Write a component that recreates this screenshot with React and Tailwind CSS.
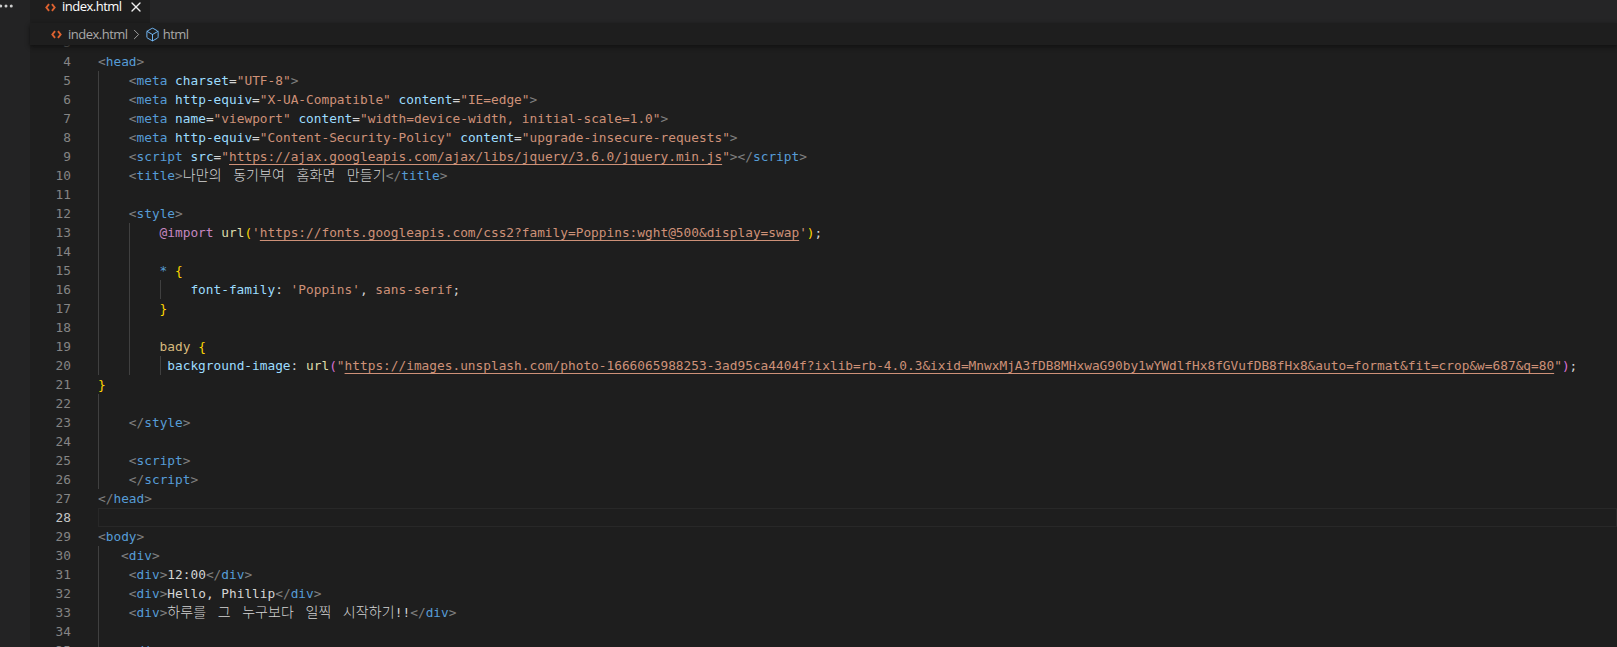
import { X, ChevronRight, Box, Ellipsis } from 'lucide-react';

const mono = 'font-["DejaVu_Sans_Mono","Noto_Sans_CJK_KR",monospace]';

// token colours
const c = {
  b: 'text-[#808080]',
  t: 'text-[#569cd6]',
  a: 'text-[#9cdcfe]',
  s: 'text-[#ce9178]',
  l: 'text-[#ce9178] underline decoration-1 underline-offset-[3px]',
  x: 'text-[#d4d4d4]',
  h: 'text-[#d4d4d4] text-[14px] font-light tracking-[0.1px] [word-spacing:2.9px]',
  y: 'text-[#ffd700]',
  p: 'text-[#da70d6]',
  f: 'text-[#dcdcaa]',
  k: 'text-[#c586c0]',
  u: 'text-[#d7ba7d]',
};

const open = (name) => [['b', '<'], ['t', name], ['b', '>']];
const close = (name) => [['b', '</'], ['t', name], ['b', '>']];

// n = line number, g = indent guides, i = indent in chars, code = tokens
const lines = [
  { n: 3, g: 0, i: 0, code: [] },
  { n: 4, g: 0, i: 0, code: open('head') },
  { n: 5, g: 1, i: 4, code: [['b', '<'], ['t', 'meta'], ['x', ' '], ['a', 'charset'], ['x', '='], ['s', '"UTF-8"'], ['b', '>']] },
  { n: 6, g: 1, i: 4, code: [['b', '<'], ['t', 'meta'], ['x', ' '], ['a', 'http-equiv'], ['x', '='], ['s', '"X-UA-Compatible"'], ['x', ' '], ['a', 'content'], ['x', '='], ['s', '"IE=edge"'], ['b', '>']] },
  { n: 7, g: 1, i: 4, code: [['b', '<'], ['t', 'meta'], ['x', ' '], ['a', 'name'], ['x', '='], ['s', '"viewport"'], ['x', ' '], ['a', 'content'], ['x', '='], ['s', '"width=device-width, initial-scale=1.0"'], ['b', '>']] },
  { n: 8, g: 1, i: 4, code: [['b', '<'], ['t', 'meta'], ['x', ' '], ['a', 'http-equiv'], ['x', '='], ['s', '"Content-Security-Policy"'], ['x', ' '], ['a', 'content'], ['x', '='], ['s', '"upgrade-insecure-requests"'], ['b', '>']] },
  { n: 9, g: 1, i: 4, code: [['b', '<'], ['t', 'script'], ['x', ' '], ['a', 'src'], ['x', '='], ['s', '"'], ['l', 'https://ajax.googleapis.com/ajax/libs/jquery/3.6.0/jquery.min.js'], ['s', '"'], ['b', '>'], ...close('script')] },
  { n: 10, g: 1, i: 4, code: [...open('title'), ['h', '나만의 동기부여 홈화면 만들기'], ...close('title')] },
  { n: 11, g: 1, i: 4, code: [] },
  { n: 12, g: 1, i: 4, code: open('style') },
  { n: 13, g: 2, i: 8, code: [['k', '@import'], ['x', ' '], ['f', 'url'], ['y', '('], ['s', "'"], ['l', 'https://fonts.googleapis.com/css2?family=Poppins:wght@500&display=swap'], ['s', "'"], ['y', ')'], ['x', ';']] },
  { n: 14, g: 2, i: 8, code: [] },
  { n: 15, g: 2, i: 8, code: [['t', '*'], ['x', ' '], ['y', '{']] },
  { n: 16, g: 3, i: 12, code: [['a', 'font-family'], ['x', ': '], ['s', "'Poppins'"], ['x', ', '], ['s', 'sans-serif'], ['x', ';']] },
  { n: 17, g: 2, i: 8, code: [['y', '}']] },
  { n: 18, g: 2, i: 8, code: [] },
  { n: 19, g: 2, i: 8, code: [['u', 'bady'], ['x', ' '], ['y', '{']] },
  { n: 20, g: 3, i: 9, code: [['a', 'background-image'], ['x', ': '], ['f', 'url'], ['p', '('], ['s', '"'], ['l', 'https://images.unsplash.com/photo-1666065988253-3ad95ca4404f?ixlib=rb-4.0.3&ixid=MnwxMjA3fDB8MHxwaG90by1wYWdlfHx8fGVufDB8fHx8&auto=format&fit=crop&w=687&q=80'], ['s', '"'], ['p', ')'], ['x', ';']] },
  { n: 21, g: 0, i: 0, code: [['y', '}']] },
  { n: 22, g: 1, i: 4, code: [] },
  { n: 23, g: 1, i: 4, code: close('style') },
  { n: 24, g: 1, i: 4, code: [] },
  { n: 25, g: 1, i: 4, code: open('script') },
  { n: 26, g: 1, i: 4, code: close('script') },
  { n: 27, g: 0, i: 0, code: close('head') },
  { n: 28, g: 0, i: 0, code: [], active: true },
  { n: 29, g: 0, i: 0, code: open('body') },
  { n: 30, g: 1, i: 3, code: open('div') },
  { n: 31, g: 1, i: 4, code: [...open('div'), ['x', '12:00'], ...close('div')] },
  { n: 32, g: 1, i: 4, code: [...open('div'), ['x', 'Hello, Phillip'], ...close('div')] },
  { n: 33, g: 1, i: 4, code: [...open('div'), ['h', '하루를 그 누구보다 일찍 시작하기'], ['x', '!!'], ...close('div')] },
  { n: 34, g: 1, i: 4, code: [] },
  { n: 35, g: 1, i: 4, code: open('div') },
];

const HtmlIcon = ({ className }) => (
  <svg viewBox="0 0 12 10" fill="none" stroke="#dd6230" strokeWidth="2.1" className={className}>
    <path d="M4.4 1.2 1.4 5l3 3.8M7.6 1.2l3 3.8-3 3.8" />
  </svg>
);

const CodeLine = ({ line }) => {
  // guides take one tab stop each, whatever is left of the indent is plain space
  const charW = 7.7;
  const guides = Array.from({ length: line.g });
  const rest = line.i * charW - line.g * 4 * charW;
  return (
    <div className="flex h-[19px] leading-[19px]">
      <div className={`w-[41px] shrink-0 text-right ${line.active ? 'text-[#c6c6c6]' : 'text-[#858585]'}`}>
        {line.n}
      </div>
      <div
        className={`ml-[27px] flex h-[19px] min-w-0 flex-1 whitespace-pre ${
          line.active ? 'border border-[#282828]' : ''
        }`}
      >
        {guides.map((_, i) => (
          <span key={i} className="h-[19px] w-[30.8px] shrink-0 border-l border-[#404040]" />
        ))}
        {rest !== 0 && <span className="shrink-0" style={{ width: rest > 0 ? rest : 0, marginLeft: rest < 0 ? rest : 0 }} />}
        <span>
          {line.code.map(([k, text], i) => (
            <span key={i} className={c[k]}>
              {text}
            </span>
          ))}
        </span>
      </div>
    </div>
  );
};

export default function App() {
  return (
    <div className="flex h-[647px] w-full overflow-hidden bg-[#1e1e1e]">
      <aside className="w-[30px] shrink-0 overflow-hidden bg-[#232324]">
        <Ellipsis className="-mt-[3px] -ml-[3px] h-[18px] w-[18px] text-[#cccccc]" strokeWidth={2} />
      </aside>

      <main className="flex min-w-0 flex-1 flex-col">
        {/* tabs */}
        <div className='flex h-[23px] shrink-0 bg-[#252526] font-["Open_Sans",sans-serif] text-[13px] tracking-[-0.5px]'>
          <div className="flex w-[120px] items-center bg-[#1e1e1e] pb-[9px] pl-[15px]">
            <HtmlIcon className="h-[9px] w-[11px]" />
            <span className="ml-[6px] text-white">index.html</span>
            <X className="ml-[6px] h-[16px] w-[16px] text-[#f0f0f0]" strokeWidth={2} />
          </div>
        </div>

        {/* breadcrumb */}
        <div className='relative z-10 flex h-[22px] shrink-0 items-center bg-[#1e1e1e] pt-[1px] pl-[21px] font-["Open_Sans",sans-serif] text-[13px] tracking-[-0.5px] text-[#a9a9a9] shadow-[0_2px_4px_#111111]'>
          <HtmlIcon className="h-[9px] w-[11px]" />
          <span className="ml-[6px]">index.html</span>
          <ChevronRight className="h-[17px] w-[17px] text-[#a9a9a9]" strokeWidth={1.3} />
          <Box className="h-[15px] w-[15px] text-[#75beff]" strokeWidth={1.5} />
          <span className="ml-[3px]">html</span>
        </div>

        {/* editor */}
        <div className={`min-h-0 flex-1 overflow-hidden ${mono} text-[12.8px]`}>
          <div className="-mt-[12px]">
            {lines.map((line) => (
              <CodeLine key={line.n} line={line} />
            ))}
          </div>
        </div>
      </main>
    </div>
  );
}
